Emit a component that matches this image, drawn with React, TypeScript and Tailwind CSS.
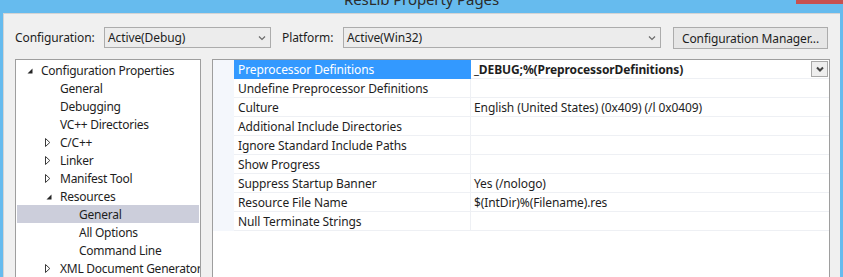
import React from "react";

const Expanded = () => (
  <svg width="6" height="6" viewBox="0 0 6 6" className="block">
    <polygon points="5.5,0.5 5.5,5.5 0.5,5.5" fill="#262626" />
  </svg>
);

const Collapsed = () => (
  <svg width="6" height="9" viewBox="0 0 6 9" className="block">
    <polygon points="0.5,0.5 4.8,4.5 0.5,8.5" fill="none" stroke="#3a3a3a" strokeWidth="1" />
  </svg>
);

const Chevron = ({ bold = false }: { bold?: boolean }) => (
  <svg width="8" height="6" viewBox="0 0 8 6" className="block">
    <polyline
      points="1,1.5 4,4.5 7,1.5"
      fill="none"
      stroke={bold ? "#444" : "#6a6a6a"}
      strokeWidth={bold ? 2 : 1.2}
    />
  </svg>
);

type TreeItem = { label: string; level: number; state?: "open" | "closed"; selected?: boolean };

const tree: TreeItem[] = [
  { label: "Configuration Properties", level: 0, state: "open" },
  { label: "General", level: 1 },
  { label: "Debugging", level: 1 },
  { label: "VC++ Directories", level: 1 },
  { label: "C/C++", level: 1, state: "closed" },
  { label: "Linker", level: 1, state: "closed" },
  { label: "Manifest Tool", level: 1, state: "closed" },
  { label: "Resources", level: 1, state: "open" },
  { label: "General", level: 2, selected: true },
  { label: "All Options", level: 2 },
  { label: "Command Line", level: 2 },
  { label: "XML Document Generator", level: 1, state: "closed" },
];

const props: { name: string; value: string }[] = [
  { name: "Preprocessor Definitions", value: "_DEBUG;%(PreprocessorDefinitions)" },
  { name: "Undefine Preprocessor Definitions", value: "" },
  { name: "Culture", value: "English (United States) (0x409) (/l 0x0409)" },
  { name: "Additional Include Directories", value: "" },
  { name: "Ignore Standard Include Paths", value: "" },
  { name: "Show Progress", value: "" },
  { name: "Suppress Startup Banner", value: "Yes (/nologo)" },
  { name: "Resource File Name", value: "$(IntDir)%(Filename).res" },
  { name: "Null Terminate Strings", value: "" },
];

const indentW: Record<number, string> = {
  0: "w-[8px]",
  1: "w-[27px]",
  2: "w-[46px]",
};

export default function App() {
  return (
    <div className="relative w-[843px] h-[277px] overflow-hidden bg-[#66bbee] font-['Noto_Sans',sans-serif] text-[12px] tracking-[-0.1px] text-[#1e1e1e]">
      <div className="h-[13px] flex justify-center overflow-hidden">
        <span className="text-[15px] leading-[15px] -mt-[8px] text-[#2b2b2b] whitespace-nowrap">
          ResLib Property Pages
        </span>
      </div>
      <div className="absolute top-0 right-0 w-[47px] h-[4px] bg-[#c75050]" />

      <div className="ml-[3px] w-[837px] h-[264px] bg-[#f0f0f0] border-l border-t border-[#d4d4d4] flex flex-col pl-[11px] overflow-hidden">
        {/* toolbar */}
        <div className="mt-[13px] h-[22px] flex items-start shrink-0">
          <div className="w-[89px] h-[21px] pt-px flex items-center whitespace-nowrap">Configuration:</div>
          <div className="w-[167px] h-[21px] border border-[#acacac] bg-[#ececec] flex items-center pl-[3px] pr-[4px]">
            <span className="flex-1 pt-px whitespace-nowrap">Active(Debug)</span>
            <Chevron />
          </div>
          <div className="ml-[11px] w-[61px] h-[21px] pt-px flex items-center whitespace-nowrap">Platform:</div>
          <div className="w-[318px] h-[21px] border border-[#acacac] bg-[#ececec] flex items-center pl-[3px] pr-[4px]">
            <span className="flex-1 pt-px whitespace-nowrap">Active(Win32)</span>
            <Chevron />
          </div>
          <div className="ml-[12px] w-[155px] h-[22px] pt-px border border-[#acacac] bg-[#e6e6e6] flex items-center justify-center whitespace-nowrap">
            Configuration Manager...
          </div>
        </div>

        {/* panels */}
        <div className="mt-[10px] flex-1 flex min-h-0">
          <div className="w-[186px] border-l border-t border-r border-[#9e9e9e] bg-white p-px overflow-hidden tracking-[-0.25px]">
            {tree.map((t, i) => (
              <div
                key={i}
                className={`h-[18px] flex items-center whitespace-nowrap ${t.selected ? "bg-[#cccedb]" : ""}`}
              >
                <div className={`${indentW[t.level]} shrink-0`} />
                <div className="w-[16px] shrink-0 flex items-center">
                  {t.state === "open" && (
                    <div className="ml-[2px] mt-[1px]">
                      <Expanded />
                    </div>
                  )}
                  {t.state === "closed" && (
                    <div className="ml-[1px]">
                      <Collapsed />
                    </div>
                  )}
                </div>
                <span className="pt-px">{t.label}</span>
              </div>
            ))}
          </div>

          <div className="ml-[11px] w-[618px] border-l border-t border-r border-[#9e9e9e] bg-white overflow-hidden">
            {props.map((p, i) => {
              const sel = i === 0;
              return (
                <div key={i} className="h-[19px] flex">
                  <div className="w-[21px] shrink-0 bg-[#f4f7fc]" />
                  <div
                    className={`w-[237px] shrink-0 border-r border-b flex items-center pl-[4px] pt-[2px] whitespace-nowrap ${
                      sel ? "bg-[#3399ff] text-white border-[#3399ff]" : "border-[#eef0f4]"
                    }`}
                  >
                    {p.name}
                  </div>
                  <div className="flex-1 border-b border-[#eef0f4] flex items-center pl-[3px] pr-px whitespace-nowrap">
                    <span className={`flex-1 pt-[2px] ${sel ? "font-bold" : ""}`}>{p.value}</span>
                    {sel && (
                      <div className="w-[17px] h-[16px] border border-[#a8a8a8] bg-[#eeeeee] flex items-center justify-center">
                        <Chevron bold />
                      </div>
                    )}
                  </div>
                </div>
              );
            })}
          </div>
        </div>
      </div>
    </div>
  );
}
